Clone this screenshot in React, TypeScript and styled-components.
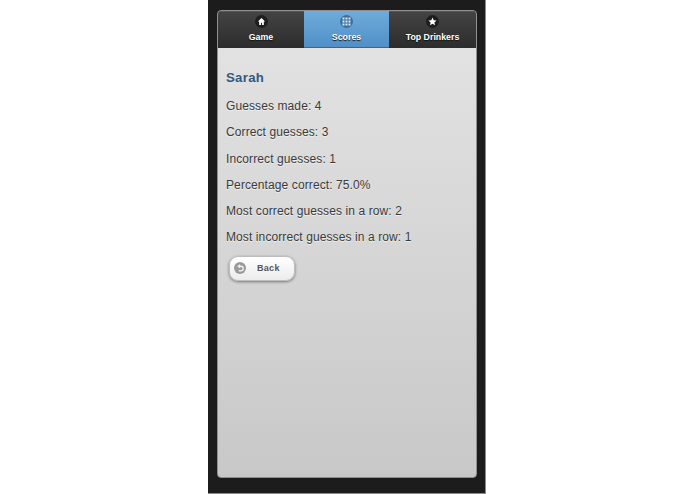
import React from "react";
import styled, { createGlobalStyle } from "styled-components";

const Global = createGlobalStyle`
  html, body { margin: 0; padding: 0; background: #fff; }
  body { font-family: "Liberation Sans", Arial, sans-serif; height: 494px; overflow: hidden; }
`;

const Phone = styled.div`
  width: 278px;
  height: 494px;
  margin-left: 208px;
  box-sizing: border-box;
  background: #1c1c1c;
  border-right: 1px solid #8c8c8c;
  border-bottom: 1px solid #8c8c8c;
  padding: 10px 8px 0 9px;
`;

const Page = styled.div`
  height: 468px;
  box-sizing: border-box;
  border: 1px solid #8f8f8f;
  border-radius: 4px;
  overflow: hidden;
  background: linear-gradient(#e4e4e4, #c8c8c8);
  display: flex;
  flex-direction: column;
`;

const Nav = styled.nav`
  display: grid;
  grid-template-columns: 86px 85px 1fr;
  height: 37px;
  flex: none;
`;

const Tab = styled.div<{ $active?: boolean }>`
  display: flex;
  flex-direction: column;
  align-items: center;
  padding-top: 4px;
  box-sizing: border-box;
  color: #fff;
  font-size: 8.8px;
  font-weight: bold;
  text-shadow: 0 1px 1px #111;
  background: ${(p) =>
    p.$active
      ? "linear-gradient(#6facdc, #4f8fc6)"
      : "linear-gradient(#444, #2c2c2c)"};
  box-shadow: ${(p) => (p.$active ? "inset 0 -1px 0 #2c6a9c" : "inset 0 1px 0 #555")};
`;

const IconDisc = styled.span<{ $active?: boolean }>`
  width: 13px;
  height: 13px;
  border-radius: 50%;
  background: ${(p) => (p.$active ? "#3b6f9c" : "#1e1e1e")};
  display: flex;
  align-items: center;
  justify-content: center;
  margin-bottom: 4px;
`;

const Content = styled.main`
  padding: 21px 8px 0 8px;
  flex: 1;
`;

const Name = styled.h2`
  margin: 0 0 12px;
  font-size: 13.2px;
  line-height: 18px;
  font-weight: bold;
  color: #2f5a80;
  letter-spacing: 0.3px;
`;

const Stat = styled.p`
  margin: 0 0 11px;
  font-size: 12px;
  line-height: 15.3px;
  letter-spacing: 0.1px;
  color: #3a3a3a;
  text-shadow: 0 1px 0 #eee;
`;

const Button = styled.button`
  display: flex;
  align-items: center;
  width: 66px;
  height: 25px;
  margin: -1px 0 0 3px;
  padding: 0 0 0 4px;
  border: 1px solid #bdbdbd;
  border-radius: 9px;
  background: linear-gradient(#fff, #ececec);
  box-shadow: 0 1px 3px rgba(0, 0, 0, 0.45);
  font-family: inherit;
  font-size: 9px;
  font-weight: bold;
  color: #555;
  letter-spacing: 0.3px;
`;

const BackDisc = styled.span`
  width: 12px;
  height: 12px;
  border-radius: 50%;
  background: #9a9a9a;
  display: flex;
  align-items: center;
  justify-content: center;
  margin-right: 11px;
`;

const Home = () => (
  <svg width="9" height="9" viewBox="0 0 10 10"><path d="M5 1 1 5h1.4v4h2V6.5h1.2V9h2V5H9z" fill="#fff" /></svg>
);
const GridIcon = () => (
  <svg width="9" height="9" viewBox="0 0 9 9" fill="#dcebf7">
    {[0.5, 3.5, 6.5].flatMap((y) => [0.5, 3.5, 6.5].map((x) => <rect key={`${x}${y}`} x={x} y={y} width="2" height="2" />))}
  </svg>
);
const Star = () => (
  <svg width="9" height="9" viewBox="0 0 10 10"><path d="M5 .6 6.3 3.6l3.2.3-2.4 2.1.7 3.2L5 7.5 2.2 9.2l.7-3.2L.5 3.9l3.2-.3z" fill="#fff" /></svg>
);
const BackIcon = () => (
  <svg width="9" height="9" viewBox="0 0 10 10" fill="none" stroke="#eee" strokeWidth="1.5"><path d="M3 2.5h2.5a2.5 2.5 0 0 1 0 5H3" /><path d="M4.5 .8 2.6 2.5l1.9 1.7" /></svg>
);

const stats: [string, string][] = [
  ["Guesses made:", "4"],
  ["Correct guesses:", "3"],
  ["Incorrect guesses:", "1"],
  ["Percentage correct:", "75.0%"],
  ["Most correct guesses in a row:", "2"],
  ["Most incorrect guesses in a row:", "1"],
];

export default function App() {
  return (
    <>
      <Global />
      <Phone>
        <Page>
          <Nav>
            <Tab><IconDisc><Home /></IconDisc>Game</Tab>
            <Tab $active><IconDisc $active><GridIcon /></IconDisc>Scores</Tab>
            <Tab><IconDisc><Star /></IconDisc>Top Drinkers</Tab>
          </Nav>
          <Content>
            <Name>Sarah</Name>
            {stats.map(([l, v]) => (
              <Stat key={l}>{l} {v}</Stat>
            ))}
            <Button><BackDisc><BackIcon /></BackDisc>Back</Button>
          </Content>
        </Page>
      </Phone>
    </>
  );
}
